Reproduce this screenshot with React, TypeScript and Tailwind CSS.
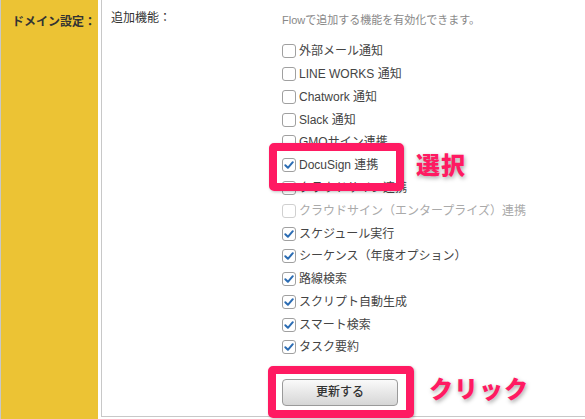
import { type ReactNode } from "react";

type Feature = {
  label: string;
  checked: boolean;
  disabled?: boolean;
};

const features: Feature[] = [
  { label: "外部メール通知", checked: false },
  { label: "LINE WORKS 通知", checked: false },
  { label: "Chatwork 通知", checked: false },
  { label: "Slack 通知", checked: false },
  { label: "GMOサイン連携", checked: false },
  { label: "DocuSign 連携", checked: true },
  { label: "クラウドサイン連携", checked: false },
  { label: "クラウドサイン（エンタープライズ）連携", checked: false, disabled: true },
  { label: "スケジュール実行", checked: true },
  { label: "シーケンス（年度オプション）", checked: true },
  { label: "路線検索", checked: true },
  { label: "スクリプト自動生成", checked: true },
  { label: "スマート検索", checked: true },
  { label: "タスク要約", checked: true },
];

const Checkbox = ({ checked, disabled }: { checked: boolean; disabled?: boolean }) => (
  <span
    className={`flex h-[14px] w-[14px] shrink-0 items-center justify-center rounded-[3px] border bg-white ${
      disabled ? "border-[#d0d0d0]" : "border-[#a0a0a0]"
    }`}
  >
    {checked && (
      <svg width="12" height="12" viewBox="0 0 12 12" fill="none">
        <path
          d="M2.3 6.3 L4.9 8.8 L9.8 3.2"
          stroke="#2b6cb3"
          strokeWidth="2"
          strokeLinecap="round"
          strokeLinejoin="round"
        />
      </svg>
    )}
  </span>
);

const Callout = ({ className, children }: { className: string; children: ReactNode }) => (
  <span
    className={`absolute font-black text-[24px] leading-none tracking-[1px] text-[#ff1a62] [-webkit-text-stroke:5px_white] [paint-order:stroke_fill] [text-shadow:1px_2px_4px_rgba(0,0,0,0.35)] ${className}`}
  >
    {children}
  </span>
);

export default function App() {
  return (
    <div className="relative flex h-[419px] w-[585px] overflow-hidden bg-white font-['Liberation_Sans','Noto_Sans_CJK_JP',sans-serif] text-[#333]">
      {/* left yellow header column */}
      <div className="h-full w-[98px] shrink-0 border-l border-[#c8c8c8] bg-[#ecc334] pl-[11px] pt-[9px]">
        <span className="text-[12px] font-bold leading-[18px] text-[#333]">ドメイン設定：</span>
      </div>

      <div className="ml-[3px] flex h-[417px] flex-1 border-b border-l border-[#c8c8c8]">
        <div className="w-[180px] shrink-0 pl-[9px] pt-[9px] text-[12px] leading-[18px]">追加機能：</div>

        <div className="flex flex-col pt-[12px]">
          <p className="h-[16px] text-[11px] leading-[16px] text-[#888]">
            Flowで追加する機能を有効化できます。
          </p>

          <ul className="mt-[12px] flex flex-col">
            {features.map((f) => (
              <li key={f.label} className="flex h-[22.77px] items-center gap-[3px]">
                <Checkbox checked={f.checked} disabled={f.disabled} />
                <span className={`text-[12px] ${f.disabled ? "text-[#aaa]" : "text-[#444]"}`}>
                  {f.label}
                </span>
              </li>
            ))}
          </ul>

          <button
            type="button"
            className="mt-[20px] h-[27px] w-[116px] rounded-[4px] border border-[#9a9a9a] bg-gradient-to-b from-[#fafafa] to-[#d6d6d6] text-[12px] font-medium text-[#333]"
          >
            更新する
          </button>
        </div>
      </div>

      {/* annotation overlays */}
      <div className="absolute left-[269px] top-[143px] h-[48px] w-[135px] rounded-[5px] border-[8px] border-[#ff1a62] shadow-[1px_1px_3px_rgba(0,0,0,0.25)]" />
      <Callout className="left-[416px] top-[154px]">選択</Callout>

      <div className="absolute left-[268px] top-[366px] h-[52px] w-[146px] rounded-[5px] border-[8px] border-[#ff1a62] shadow-[1px_1px_3px_rgba(0,0,0,0.25)]" />
      <Callout className="left-[429px] top-[378px]">クリック</Callout>
    </div>
  );
}
